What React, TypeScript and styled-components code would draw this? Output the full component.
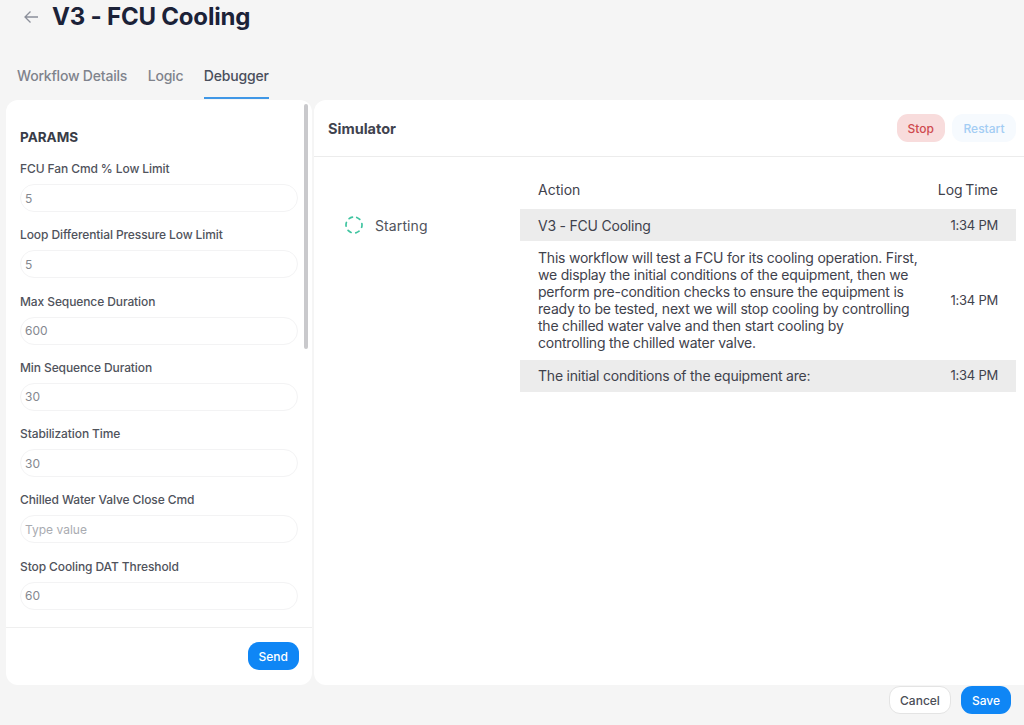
import React from "react";
import styled, { createGlobalStyle } from "styled-components";

const GlobalStyle = createGlobalStyle`
  html, body {
    margin: 0;
    padding: 0;
    background: #f5f5f5;
    font-family: Inter, "Noto Sans", "Liberation Sans", sans-serif;
  }
  * { box-sizing: border-box; }
`;

const Page = styled.div`
  width: 1024px;
  height: 725px;
  overflow: hidden;
  display: flex;
  flex-direction: column;
`;

const TitleBar = styled.div`
  height: 34px;
  padding-left: 23px;
  display: flex;
  align-items: center;
  gap: 13px;
`;

const BackButton = styled.button`
  display: flex;
  padding: 0;
  border: 0;
  background: none;
  color: #8b8f9a;
`;

const Title = styled.h1`
  margin: 0;
  font-size: 24px;
  line-height: 34px;
  font-weight: 700;
  letter-spacing: -0.2px;
  color: #1b2238;
`;

const Tabs = styled.div`
  height: 33px;
  margin-top: 32px;
  padding-left: 17px;
  display: flex;
  gap: 20.5px;
`;

const Tab = styled.div<{ $active?: boolean }>`
  height: 33px;
  padding-top: 1px;
  font-size: 14px;
  line-height: 18px;
  font-weight: 500;
  letter-spacing: -0.2px;
  color: ${(p) => (p.$active ? "#4a4f5c" : "#7f838c")};
  border-bottom: 2px solid ${(p) => (p.$active ? "#3f97e6" : "transparent")};
`;

const Panels = styled.div`
  height: 585px;
  margin-top: 1px;
  padding-left: 6px;
  display: flex;
  gap: 2px;
`;

const ParamsPanel = styled.section`
  position: relative;
  width: 306px;
  background: #fff;
  border-radius: 12px;
  display: flex;
  flex-direction: column;
  overflow: hidden;
`;

const Scrollbar = styled.div`
  position: absolute;
  top: 4px;
  right: 4px;
  width: 4px;
  height: 245px;
  border-radius: 2px;
  background: #c9c9cc;
`;

const ParamsBody = styled.div`
  flex: 1;
  min-height: 0;
  padding: 28px 14px 0;
  overflow: hidden;
`;

const ParamsTitle = styled.h2`
  margin: 0 0 15px;
  height: 18px;
  font-size: 13.5px;
  line-height: 18px;
  font-weight: 700;
  color: #383c47;
`;

const Field = styled.div`
  height: 66.3px;
`;

const Label = styled.div`
  height: 16px;
  margin-bottom: 7px;
  font-size: 12px;
  line-height: 16px;
  font-weight: 450;
  letter-spacing: -0.1px;
  color: #50535c;
`;

const ValueInput = styled.input`
  display: block;
  width: 278px;
  height: 28px;
  padding: 0 4px;
  border: 1px solid #f3f3f4;
  border-radius: 14px;
  outline: none;
  background: #fff;
  font-family: inherit;
  font-size: 12px;
  color: #85888f;
  &::placeholder { color: #a9abb1; opacity: 1; }
`;

const ParamsFooter = styled.div`
  height: 58px;
  border-top: 1px solid #efefef;
  padding: 14px 13px 0 0;
  display: flex;
  justify-content: flex-end;
  align-items: flex-start;
`;

const Button = styled.button<{ $variant: "primary" | "danger" | "ghost" | "outline" }>`
  height: 28px;
  padding: 0 ${(p) => ({ primary: "11px", danger: "11px", ghost: "11.5px", outline: "10px" }[p.$variant])};
  border-radius: 11px;
  font-family: inherit;
  font-size: 12px;
  font-weight: 500;
  border: ${(p) => (p.$variant === "outline" ? "1px solid #e4e4e4" : "0")};
  background: ${(p) =>
    ({ primary: "#0f86f5", danger: "#f8dcdc", ghost: "#f6fafe", outline: "#fff" }[p.$variant])};
  color: ${(p) =>
    ({ primary: "#fff", danger: "#cf4a4f", ghost: "#a3cdf4", outline: "#4b4e57" }[p.$variant])};
`;

const SimulatorPanel = styled.section`
  flex: 1;
  background: #fff;
  border-radius: 12px 0 0 12px;
  display: flex;
  flex-direction: column;
`;

const SimHeader = styled.header`
  height: 57px;
  padding: 0 8px 0 14px;
  border-bottom: 1px solid #ececec;
  display: flex;
  align-items: center;
  justify-content: space-between;
`;

const SimTitle = styled.h2`
  margin: 0;
  font-size: 14.5px;
  font-weight: 700;
  color: #3f434e;
`;

const SimActions = styled.div`
  display: flex;
  gap: 7px;
`;

const SimBody = styled.div`
  flex: 1;
  padding: 20px 8px 0 31px;
  display: flex;
`;

const Status = styled.div`
  width: 175px;
  height: 32px;
  margin-top: 32px;
  display: flex;
  align-items: center;
  gap: 12px;
  font-size: 14px;
  letter-spacing: 0.1px;
  color: #50535c;
`;

const LogTable = styled.div`
  flex: 1;
`;

const LogHead = styled.div`
  height: 32px;
  padding: 0 18px;
  display: flex;
  align-items: flex-start;
  justify-content: space-between;
  font-size: 14px;
  line-height: 26px;
  font-weight: 400;
  word-spacing: -1.5px;
  color: #3f424c;
`;

const LogRow = styled.div<{ $shaded?: boolean }>`
  padding: ${(p) => (p.$shaded ? "7.5px 18px" : "8px 18px 8.5px")};
  display: flex;
  align-items: center;
  justify-content: space-between;
  gap: 18px;
  background: ${(p) => (p.$shaded ? "#ececec" : "#fff")};
  font-size: 14px;
  line-height: 17px;
  font-weight: 400;
  letter-spacing: -0.22px;
  color: #3f424c;
`;

const LogText = styled.div`
  width: 382px;
  white-space: pre-line;
`;

const LogTime = styled.div`
  font-size: 13px;
  white-space: nowrap;
`;

const PageFooter = styled.footer`
  height: 28px;
  margin-top: 1px;
  padding-right: 13px;
  display: flex;
  justify-content: flex-end;
  gap: 10px;
`;

const params = [
  { label: "FCU Fan Cmd % Low Limit", value: "5" },
  { label: "Loop Differential Pressure Low Limit", value: "5" },
  { label: "Max Sequence Duration", value: "600" },
  { label: "Min Sequence Duration", value: "30" },
  { label: "Stabilization Time", value: "30" },
  { label: "Chilled Water Valve Close Cmd", value: "" },
  { label: "Stop Cooling DAT Threshold", value: "60" },
];

const logs = [
  { text: "V3 - FCU Cooling", shaded: true },
  {
    text: "This workflow will test a FCU for its cooling operation. First, we display the initial conditions of the equipment, then we perform pre-condition checks to ensure the equipment is ready to be tested, next we will stop cooling by controlling the chilled water valve and then start cooling by\ncontrolling the chilled water valve.",
  },
  { text: "The initial conditions of the equipment are:", shaded: true },
];

const Spinner = () => (
  <svg width="18" height="18" viewBox="0 0 18 18" fill="none">
    <circle
      cx="9"
      cy="9"
      r="8"
      stroke="#3fc4a0"
      strokeWidth="1.7"
      strokeDasharray="3.6 4.8"
      strokeLinecap="round"
      transform="rotate(-70 9 9)"
    />
  </svg>
);

const App = () => {
  return (
    <Page>
      <GlobalStyle />
      <TitleBar>
        <BackButton aria-label="Back">
          <svg width="16" height="16" viewBox="0 0 16 16" fill="none" stroke="currentColor" strokeWidth="1.3">
            <path d="M15 8H2M7.5 2.5L2 8l5.5 5.5" />
          </svg>
        </BackButton>
        <Title>V3 - FCU Cooling</Title>
      </TitleBar>
      <Tabs>
        <Tab>Workflow Details</Tab>
        <Tab>Logic</Tab>
        <Tab $active>Debugger</Tab>
      </Tabs>
      <Panels>
        <ParamsPanel>
          <Scrollbar />
          <ParamsBody>
            <ParamsTitle>PARAMS</ParamsTitle>
            {params.map((p) => (
              <Field key={p.label}>
                <Label>{p.label}</Label>
                <ValueInput readOnly value={p.value} placeholder="Type value" />
              </Field>
            ))}
          </ParamsBody>
          <ParamsFooter>
            <Button $variant="primary">Send</Button>
          </ParamsFooter>
        </ParamsPanel>
        <SimulatorPanel>
          <SimHeader>
            <SimTitle>Simulator</SimTitle>
            <SimActions>
              <Button $variant="danger">Stop</Button>
              <Button $variant="ghost">Restart</Button>
            </SimActions>
          </SimHeader>
          <SimBody>
            <Status>
              <Spinner />
              Starting
            </Status>
            <LogTable>
              <LogHead>
                <span>Action</span>
                <span>Log Time</span>
              </LogHead>
              {logs.map((l) => (
                <LogRow key={l.text} $shaded={l.shaded}>
                  <LogText>{l.text}</LogText>
                  <LogTime>1:34 PM</LogTime>
                </LogRow>
              ))}
            </LogTable>
          </SimBody>
        </SimulatorPanel>
      </Panels>
      <PageFooter>
        <Button $variant="outline">Cancel</Button>
        <Button $variant="primary">Save</Button>
      </PageFooter>
    </Page>
  );
};

export default App;
